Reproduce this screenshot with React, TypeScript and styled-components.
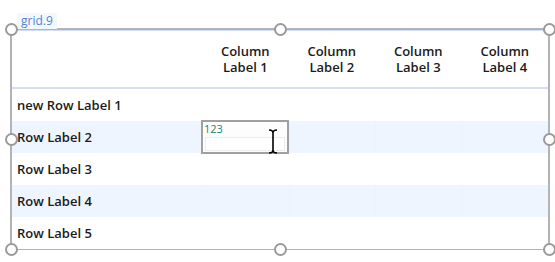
import { Fragment } from "react";
import styled, { createGlobalStyle } from "styled-components";

const GlobalStyle = createGlobalStyle`
  html, body {
    margin: 0;
    padding: 0;
    background: #ffffff;
    font-family: "Open Sans", "Liberation Sans", sans-serif;
  }
`;

const Page = styled.div`
  width: 555px;
  height: 262px;
  padding: 28px 0 0 10px;
  box-sizing: border-box;
`;

const Frame = styled.div`
  position: relative;
  width: 540px;
  height: 222px;
  box-sizing: border-box;
  border: 2px solid #b3b3b3;
`;

const Tag = styled.div`
  position: absolute;
  left: 5px;
  top: -17px;
  height: 16px;
  padding: 0 4px;
  background: #f4f8fd;
  color: #4f83d9;
  font-size: 12px;
  line-height: 15px;
  border-radius: 2px 2px 0 0;
`;

const Handle = styled.div<{ $x: string; $y: string }>`
  position: absolute;
  left: ${(p) => p.$x};
  top: ${(p) => p.$y};
  width: 9px;
  height: 9px;
  margin: -6.5px 0 0 -6.5px;
  border: 2px solid #9a9a9a;
  border-radius: 50%;
  background: #ffffff;
  z-index: 3;
`;

const Grid = styled.div`
  display: grid;
  grid-template-columns: 190px repeat(4, 1fr);
  grid-template-rows: 58px repeat(5, 32px);
  height: 100%;
  border-top: 1px solid #cfe0f6;
  box-sizing: border-box;
`;

const HeaderCell = styled.div`
  display: flex;
  align-items: center;
  justify-content: center;
  text-align: center;
  white-space: pre-line;
  font-size: 13px;
  font-weight: 600;
  line-height: 16px;
  color: #1b1b1b;
  border-bottom: 2px solid #cfe0f6;
`;

const Cell = styled.div<{ $alt: boolean; $label?: boolean }>`
  position: relative;
  display: flex;
  align-items: center;
  background: ${(p) => (p.$alt ? "#eff5fe" : "#ffffff")};
  border-left: ${(p) => (p.$label ? "none" : `1px solid ${p.$alt ? "#ecf3fd" : "#ffffff"}`)};
  padding-left: ${(p) => (p.$label ? "5px" : "0")};
  font-size: 13px;
  font-weight: 600;
  color: #1b1b1b;
  white-space: nowrap;
`;

const Editor = styled.div`
  position: absolute;
  left: -2px;
  top: -1px;
  right: 0;
  bottom: -1px;
  border: 2px solid #a0a0a0;
  background: #fdfdfd;
  z-index: 2;
  display: flex;
  flex-direction: column;
`;

const EditorValue = styled.div`
  font-size: 11px;
  font-weight: 400;
  color: #17866d;
  line-height: 14px;
  padding-left: 1px;
  height: 15px;
`;

const EditorField = styled.div`
  flex: 1;
  margin: 0 2px 1px 2px;
  border: 1px solid #ececec;
  background: #ffffff;
`;

const Caret = styled.svg`
  position: absolute;
  left: 65px;
  top: 7px;
`;

const columns = ["Column\nLabel 1", "Column\nLabel 2", "Column\nLabel 3", "Column\nLabel 4"];
const rows = ["new Row Label 1", "Row Label 2", "Row Label 3", "Row Label 4", "Row Label 5"];
const handles: [string, string][] = [
  ["-1px", "-1px"],
  ["50%", "-1px"],
  ["calc(100% + 1px)", "-1px"],
  ["-1px", "50%"],
  ["calc(100% + 1px)", "50%"],
  ["-1px", "calc(100% + 1px)"],
  ["50%", "calc(100% + 1px)"],
  ["calc(100% + 1px)", "calc(100% + 1px)"],
];

export default function App() {
  return (
    <Page>
      <GlobalStyle />
      <Frame>
        <Tag>grid.9</Tag>
        {handles.map(([x, y]) => (
          <Handle key={x + y} $x={x} $y={y} />
        ))}
        <Grid>
          <HeaderCell />
          {columns.map((c) => (
            <HeaderCell key={c}>{c}</HeaderCell>
          ))}
          {rows.map((r, i) => (
            <Fragment key={r}>
              <Cell $alt={i % 2 === 1} $label>
                {r}
              </Cell>
              {columns.map((c, j) => (
                <Cell key={c} $alt={i % 2 === 1}>
                  {i === 1 && j === 0 && (
                    <Editor>
                      <EditorValue>123</EditorValue>
                      <EditorField />
                      <Caret width="10" height="25" viewBox="0 0 10 25">
                        <path
                          d="M1 1 Q5 1 5 4 L5 21 Q5 24 1 24 M9 1 Q5 1 5 4 M5 21 Q5 24 9 24"
                          fill="none"
                          stroke="#000"
                          strokeWidth="1.6"
                        />
                      </Caret>
                    </Editor>
                  )}
                </Cell>
              ))}
            </Fragment>
          ))}
        </Grid>
      </Frame>
    </Page>
  );
}
